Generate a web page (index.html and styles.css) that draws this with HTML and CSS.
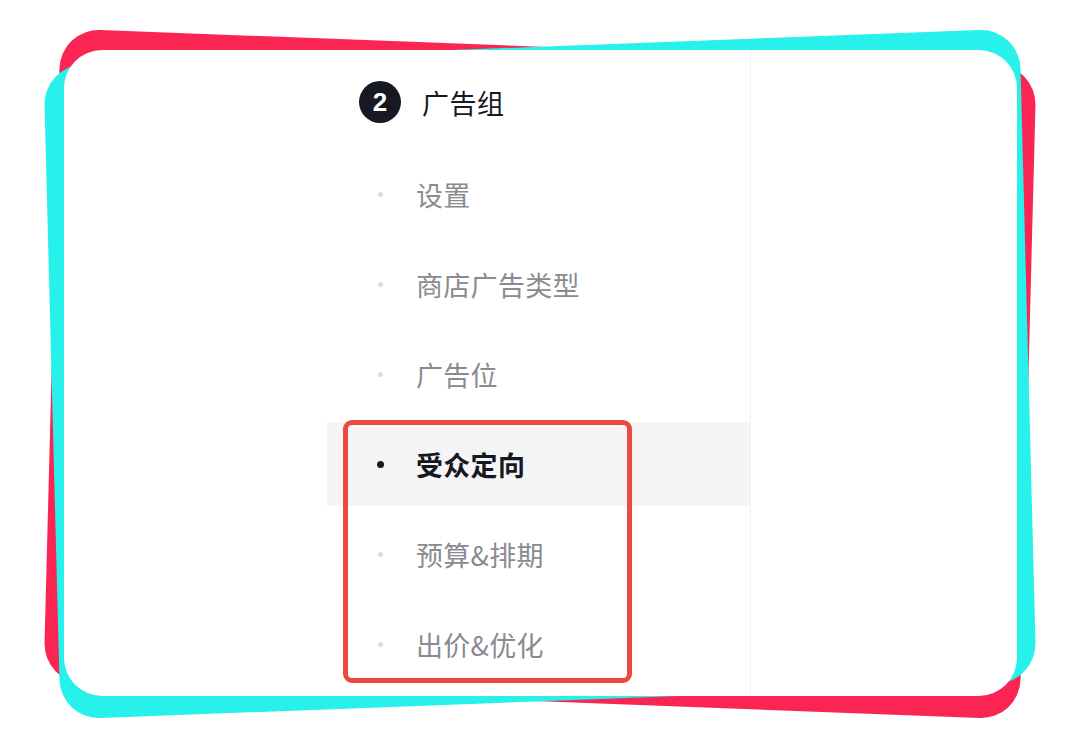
FILE: index.html
```html
<!DOCTYPE html>
<html lang="zh-CN">
<head>
<meta charset="utf-8">
<title>广告组</title>
<link rel="stylesheet" href="styles.css">
</head>
<body>
<div class="stage">
  <div class="deco deco-red"></div>
  <div class="deco deco-cyan"></div>
  <div class="card">
    <div class="spacer"></div>
    <nav class="sidebar">
      <div class="step">
        <span class="step-num">2</span>
        <span class="step-title">广告组</span>
      </div>
      <ul class="items">
        <li class="item"><span class="dot"></span><span class="label">设置</span></li>
        <li class="item"><span class="dot"></span><span class="label">商店广告类型</span></li>
        <li class="item"><span class="dot"></span><span class="label">广告位</span></li>
        <li class="item active"><span class="dot"></span><span class="label">受众定向</span></li>
        <li class="item"><span class="dot"></span><span class="label">预算&amp;排期</span></li>
        <li class="item"><span class="dot"></span><span class="label">出价&amp;优化</span></li>
        <li class="mark"></li>
      </ul>
    </nav>
    <div class="content"></div>
  </div>
</div>
</body>
</html>
```

FILE: styles.css
```css
* { box-sizing: border-box; }
html, body { margin: 0; padding: 0; background: #ffffff; }
body {
  font-family: "Noto Sans CJK SC", "Noto Sans", sans-serif;
  width: 1080px;
  height: 752px;
  overflow: hidden;
}
.stage {
  position: relative;
  width: 1080px;
  height: 752px;
  padding: 50px 0 0 64px;
}
.deco {
  position: absolute;
  left: 52px;
  top: 47px;
  width: 976px;
  height: 654px;
  border-radius: 40px;
}
.deco-red { background: #fb2553; transform: matrix(1, 0.038, -0.026, 1, 0, 0); }
.deco-cyan { background: #27f1ea; transform: matrix(1, -0.038, 0.026, 1, 0, 0); }
.card {
  position: relative;
  width: 953px;
  height: 646px;
  background: #ffffff;
  border-radius: 38px;
  display: flex;
}
.spacer { width: 263px; flex: none; }
.sidebar {
  width: 424px;
  flex: none;
  border-right: 1px solid #f0f0f2;
  padding-top: 31px;
}
.step {
  display: flex;
  align-items: center;
  height: 42px;
  padding-left: 32px;
  gap: 21px;
}
.step-num {
  width: 42px;
  height: 42px;
  border-radius: 50%;
  background: #161823;
  color: #ffffff;
  font-family: "Liberation Sans", Arial, sans-serif;
  font-weight: 700;
  font-size: 26px;
  display: flex;
  align-items: center;
  justify-content: center;
}
.step-title {
  font-size: 27px;
  font-weight: 400;
  color: #161823;
  letter-spacing: 0.5px;
}
.items {
  list-style: none;
  margin: 29px 0 0 0;
  padding: 0;
  position: relative;
  display: flex;
  flex-direction: column;
  gap: 6px;
}
.item {
  height: 84px;
  display: flex;
  align-items: center;
  padding-left: 51px;
}
.dot {
  width: 5px;
  height: 5px;
  border-radius: 50%;
  background: #dcdcdf;
  flex: none;
}
.label {
  margin-left: 33px;
  font-size: 27px;
  color: #8a8b91;
  letter-spacing: 0.3px;
}
.item.active { background: #f5f5f6; }
.item.active .dot { width: 7px; height: 7px; background: #161823; margin-left: -1px; }
.item.active .label { color: #161823; font-weight: 700; margin-left: 32px; }
.mark {
  position: absolute;
  left: 16px;
  top: 268px;
  width: 289px;
  height: 263px;
  border: 5px solid #ec4a41;
  border-radius: 9px;
}
.content { flex: 1; }
```
